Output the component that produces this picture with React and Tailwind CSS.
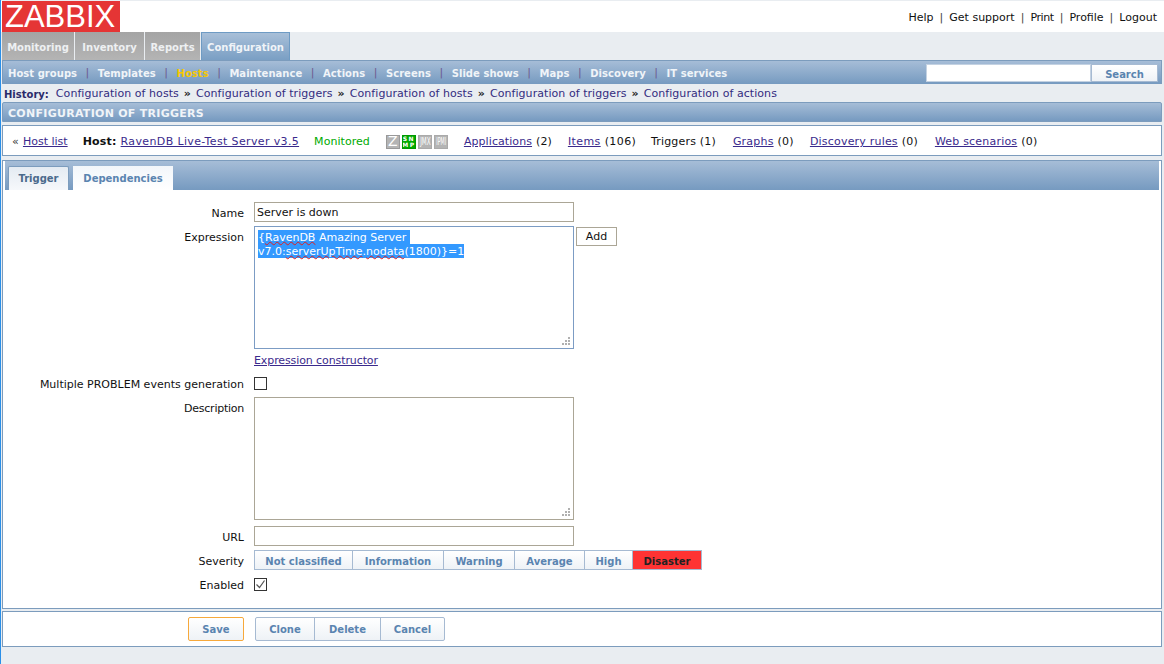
const mainTabs = [
  { label: 'Monitoring', w: 'w-[72px]' },
  { label: 'Inventory', w: 'w-[69px]' },
  { label: 'Reports', w: 'w-[55px]' },
]
const subNav = ['Host groups', 'Templates', 'Hosts', 'Maintenance', 'Actions', 'Screens', 'Slide shows', 'Maps', 'Discovery', 'IT services']
const history = ['Configuration of hosts', 'Configuration of triggers', 'Configuration of hosts', 'Configuration of triggers', 'Configuration of actions']
const topLinks = ['Help', 'Get support', 'Print', 'Profile', 'Logout']
const hostLinks = [
  { link: 'Applications', count: '(2)', w: 'w-[104px]', cls: 'tracking-[0.08px]' },
  { link: 'Items', count: '(106)', w: 'w-[83px]', cls: 'tracking-[0.4px]' },
  { link: null, count: 'Triggers (1)', w: 'w-[82px]', cls: '' },
  { link: 'Graphs', count: '(0)', w: 'w-[77px]', cls: '' },
  { link: 'Discovery rules', count: '(0)', w: 'w-[125px]', cls: '' },
  { link: 'Web scenarios', count: '(0)', w: 'w-[110px]', cls: '' },
]
const severities = [
  { label: 'Not classified', w: 'w-[99px]' },
  { label: 'Information', w: 'w-[92px]' },
  { label: 'Warning', w: 'w-[72px]' },
  { label: 'Average', w: 'w-[71px]' },
  { label: 'High', w: 'w-[49px]' },
]

function Grip() {
  return (
    <svg className="absolute right-[2px] bottom-[2px]" width="9" height="9" viewBox="0 0 9 9" fill="#b0b0b0">
      <rect x="6" y="0" width="2" height="2" />
      <rect x="3" y="3" width="2" height="2" />
      <rect x="6" y="3" width="2" height="2" />
      <rect x="0" y="6" width="2" height="2" />
      <rect x="3" y="6" width="2" height="2" />
      <rect x="6" y="6" width="2" height="2" />
    </svg>
  )
}

function Row({ label, className, children }) {
  return (
    <div className={`flex ${className}`}>
      <div className="w-[241px] shrink-0 text-right">{label}</div>
      <div className="ml-[10px] flex-1 min-w-0">{children}</div>
    </div>
  )
}

function Wavy({ children }) {
  return <span className="underline decoration-wavy decoration-[#e02020] decoration-1 underline-offset-[0px]">{children}</span>
}

function StatusIcons() {
  const base = 'w-[14px] h-[14px] border flex items-center justify-center overflow-hidden text-white'
  return (
    <div className="flex gap-[2px] ml-[16px] -mt-[2px] tracking-normal">
      <div className={`${base} bg-[#b4b4b4] border-[#999] text-[14px]`}>Z</div>
      <div className={`${base} bg-[#00aa00] border-[#009900] text-[6px] leading-[6px] font-bold text-center tracking-[1.5px]`}>SN<br />MP</div>
      <div className={`${base} bg-[#b4b4b4] border-[#aaa] text-[8px]`}><span className="scale-x-[0.7] scale-y-[1.4]">JMX</span></div>
      <div className={`${base} bg-[#b4b4b4] border-[#aaa] text-[8px]`}><span className="scale-x-[0.6] scale-y-[1.4]">IPMI</span></div>
    </div>
  )
}

export default function App() {
  return (
    <div className="relative h-[664px] w-[1164px] overflow-hidden bg-[#e9edf1] text-[11px] text-black font-['DejaVu_Sans',sans-serif]">
      {/* window edge */}
      <div className="absolute left-0 top-0 w-[1px] h-full bg-[#2a8fe8]"></div>

      {/* top bar */}
      <div className="h-[32px] bg-white border-t border-[#e9edf1] flex justify-between pl-[2px] pr-[7px]">
        <div className="w-[118px] h-[31px] bg-[#e53535] text-white text-[31px] leading-[31px] font-['Liberation_Sans',sans-serif] pl-[3px]">ZABBIX</div>
        <div className="flex items-center h-[30px] pt-[4px] text-[#111]">
          {topLinks.map((l, i) => (
            <span key={l} className="flex items-center">
              {i > 0 && <span className="mx-[6px] text-[#444]">|</span>}
              <span className={l === 'Print' ? 'tracking-[-0.4px]' : ''}>{l}</span>
            </span>
          ))}
        </div>
      </div>

      {/* main tabs */}
      <div className="h-[28px] flex pl-[2px] gap-[1px] font-bold text-[10px]">
        {mainTabs.map(t => (
          <div key={t.label} className={`${t.w} pt-[2px] bg-gradient-to-b from-[#a4a4a4] to-[#b4b4b4] text-[#eef0f2] flex items-center justify-center`}>{t.label}</div>
        ))}
        <div className="w-[89px] pt-[2px] bg-gradient-to-b from-[#a8bfd8] to-[#7a9fc4] border border-[#6e9bc4] border-b-0 text-[#f0f4f8] flex items-center justify-center">Configuration</div>
      </div>

      {/* sub nav */}
      <div className="h-[24px] mx-[2px] bg-gradient-to-b from-[#a6bdd7] to-[#769ac0] border-t border-x border-[#7c9cbd] flex items-center justify-between font-bold text-[10px] text-[#f0f4f8] pl-[5px]">
        <div className="flex items-center pt-[2px] tracking-[0.04px]">
          {subNav.map((s, i) => (
            <span key={s} className="flex items-center">
              {i > 0 && <span className="mx-[8.5px] font-normal text-[11px] text-[#6d5a8f]">|</span>}
              <span className={s === 'Hosts' ? 'text-[#f8c800]' : ''}>{s}</span>
            </span>
          ))}
        </div>
        <div className="flex h-[18px] mr-[3px] mt-[1px]">
          <div className="w-[165px] bg-white border border-[#c4d2e2]"></div>
          <div className="w-[67px] pt-[2px] bg-gradient-to-b from-white to-[#eef2f6] border border-[#a6bad2] flex items-center justify-center text-[#5a84b0]">Search</div>
        </div>
      </div>

      {/* history */}
      <div className="h-[18px] pl-[4px] pt-[2px] flex items-center text-[#332c7f] tracking-[0.06px]">
        <b className="text-[#2a2a6a] text-[10px] mr-[7px] tracking-normal">History:</b>
        {history.map((h, i) => (
          <span key={i} className="flex items-center">
            {i > 0 && <span className="mx-[5px] text-[#222] font-bold">»</span>}
            {h}
          </span>
        ))}
      </div>

      {/* page title */}
      <div className="h-[20px] mx-[2px] pt-[4px] bg-gradient-to-b from-[#a6bdd7] to-[#769ac0] border border-[#7c9cbd] rounded-t-[2px] flex items-center pl-[5px] font-bold text-[#f0f4f8] tracking-[0.28px]">
        CONFIGURATION OF TRIGGERS
      </div>

      {/* host row */}
      <div className="h-[31px] mx-[2px] mt-[3px] pt-[4px] bg-white border border-[#7c9cbd] flex items-center pl-[9px] text-[#111] tracking-[0.2px]">
        <span className="text-[#333] mr-[4px]">«</span>
        <a className="underline text-[#3a2a8c] tracking-normal">Host list</a>
        <b className="ml-[15px] mr-[4px]">Host:</b>
        <a className="underline text-[#3a2a8c] tracking-[0.36px]">RavenDB Live-Test Server v3.5</a>
        <span className="ml-[15px] text-[#00aa00] tracking-[0.05px]">Monitored</span>
        <StatusIcons />
        <div className="flex ml-[16px]">
          {hostLinks.map(h => (
            <span key={h.count + h.link} className={`${h.w} ${h.cls}`}>
              {h.link && <a className="underline text-[#3a2a8c] mr-[4px]">{h.link}</a>}
              {h.count}
            </span>
          ))}
        </div>
      </div>

      {/* trigger form */}
      <div className="h-[449px] mx-[2px] mt-[4px] bg-white border border-[#7c9cbd]">
        <div className="h-[29px] mx-[2px] pl-[3px] pt-[5px] flex gap-[4px] bg-gradient-to-b from-[#a6bdd7] to-[#769ac0] font-bold text-[10px]">
          <div className="w-[61px] bg-gradient-to-b from-[#e4ebf2] to-[#f6f8fb] border border-b-0 border-[#7c9cbd] rounded-t-[2px] flex items-center justify-center text-[#4a6a8c]">Trigger</div>
          <div className="w-[100px] pt-[1px] bg-gradient-to-b from-[#f2f6fa] to-white flex items-center justify-center text-[#5a84b0]">Dependencies</div>
        </div>

        <div className="text-[#111]">
          <Row label={<span className="leading-[24px]">Name</span>} className="mt-[12px] h-[20px]">
            <input readOnly defaultValue="Server is down" className="block w-[320px] h-[20px] border border-[#aba696] px-[2px] text-[11px] outline-none" />
          </Row>
          <Row label={<span className="leading-[24px]">Expression</span>} className="mt-[4px] h-[123px]">
            <div className="flex">
              <div className="relative w-[320px] h-[123px] border border-[#7c9cc4] px-[3px] pt-[3px] leading-[16px] text-white">
                <div className="relative z-10 h-[14px]"><span className="inline-block h-[14px] bg-[#3399ff] pr-[4px]">{'{'}<Wavy>RavenDB</Wavy> Amazing Server</span></div>
                <div className="h-[14px]"><span className="inline-block h-[14px] bg-[#3399ff]">v7.0:<Wavy>serverUpTime</Wavy>.<Wavy>nodata</Wavy>(1800)}=1</span></div>
                <Grip />
              </div>
              <div className="ml-[2px] mt-[1px] w-[41px] h-[19px] pt-[2px] border border-[#aba696] flex items-center justify-center">Add</div>
            </div>
          </Row>
          <Row label="" className="mt-[5px] h-[14px]">
            <a className="underline text-[#3a2a8c] leading-[14px] block tracking-[-0.1px]">Expression constructor</a>
          </Row>
          <Row label={<span className="leading-[16px]">Multiple PROBLEM events generation</span>} className="mt-[9px] h-[13px]">
            <div className="w-[13px] h-[13px] border border-[#333]"></div>
          </Row>
          <Row label={<span className="leading-[24px] tracking-[-0.25px]">Description</span>} className="mt-[7px] h-[123px]">
            <div className="relative w-[320px] h-[123px] border border-[#aba696]"><Grip /></div>
          </Row>
          <Row label={<span className="leading-[24px]">URL</span>} className="mt-[6px] h-[20px]">
            <div className="w-[320px] h-[20px] border border-[#aba696]"></div>
          </Row>
          <Row label={<span className="leading-[24px]">Severity</span>} className="mt-[4px] h-[20px]">
            <div className="flex font-bold text-[10px]">
              {severities.map(s => (
                <div key={s.label} className={`${s.w} h-[20px] pt-[2px] -mr-[1px] bg-gradient-to-b from-white to-[#eef2f6] border border-[#a6bad2] flex items-center justify-center text-[#5a84b0]`}>{s.label}</div>
              ))}
              <div className="w-[70px] h-[20px] pt-[2px] bg-[#ff3333] border border-[#a6bad2] flex items-center justify-center text-[#222]">Disaster</div>
            </div>
          </Row>
          <Row label={<span className="leading-[16px]">Enabled</span>} className="mt-[8px] h-[13px]">
            <div className="w-[13px] h-[13px] border border-[#333] flex items-center justify-center">
              <svg width="11" height="11" viewBox="0 0 11 11" fill="none" stroke="#555" strokeWidth="1.2"><path d="M1.5 5.5 L4.5 8.5 L9.5 1.5" /></svg>
            </div>
          </Row>
        </div>
      </div>

      {/* buttons */}
      <div className="h-[36px] mx-[2px] mt-[2px] bg-white border border-[#7c9cbd] flex items-center pl-[185px] font-bold text-[10px] text-[#5a84b0]">
        <div className="w-[56px] h-[24px] pt-[1px] bg-gradient-to-b from-white to-[#eef2f6] border border-[#f7a93b] rounded-[2px] flex items-center justify-center">Save</div>
        <div className="flex ml-[11px]">
          <div className="w-[60px] h-[24px] pt-[1px] bg-gradient-to-b from-white to-[#eef2f6] border border-[#a6bad2] rounded-l-[2px] flex items-center justify-center">Clone</div>
          <div className="w-[67px] h-[24px] pt-[1px] -ml-[1px] bg-gradient-to-b from-white to-[#eef2f6] border border-[#a6bad2] flex items-center justify-center">Delete</div>
          <div className="w-[65px] h-[24px] pt-[1px] -ml-[1px] bg-gradient-to-b from-white to-[#eef2f6] border border-[#a6bad2] rounded-r-[2px] flex items-center justify-center">Cancel</div>
        </div>
      </div>
    </div>
  )
}
